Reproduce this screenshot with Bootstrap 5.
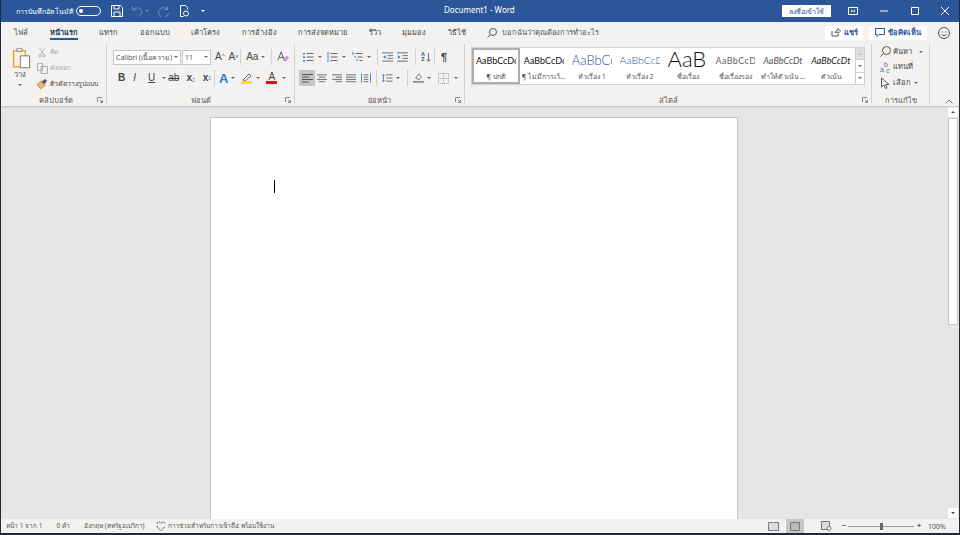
<!DOCTYPE html>
<html lang="th">
<head>
<meta charset="UTF-8" />
<title>Document1 - Word</title>
<link href="https://cdn.jsdelivr.net/npm/bootstrap@5.3.0/dist/css/bootstrap.min.css" rel="stylesheet" />
<style>
  html, body { height: 535px; overflow: hidden; }
  body { background: #1d2b3a; font-family: "Noto Sans", "Liberation Sans", sans-serif; color: #444; font-size: 7.5px; line-height: 1; }
  svg { display: block; flex: none; }
  .win { height: 533px; margin: 0 1px; display: flex; flex-direction: column; background: #e6e6e6; }

  /* title bar */
  .titlebar { height: 22px; background: #2b579a; color: #fff; padding-left: 15px; flex: none; }
  .autosave { font-size: 7px; width: 60px; white-space: nowrap; overflow: visible; }
  .toggle { width: 25px; height: 10px; border: 1px solid #fff; border-radius: 5px; padding: 2px; margin-right: 10px; }
  .toggle i { display: block; width: 4px; height: 4px; background: #fff; border-radius: 50%; }
  .qa-undo { margin-left: 8px; }
  .qa-redo { margin-left: 9px; }
  .qa-file { margin-left: 9px; }
  .qa-more { margin-left: 11px; }
  .doc-title { position: absolute; left: 443px; top: 6px; font-size: 8px; }
  .signin { width: 49px; height: 12px; background: #fff; color: #2b579a; font-size: 7px; margin-left: auto; }
  .winbtns { width: 128px; padding-left: 17px; padding-right: 10px; justify-content: space-between; }

  /* tabs */
  .tabsrow { height: 21px; background: #f3f2f1; flex: none; padding-left: 13px; color: #444; }
  .tabitem { position: relative; height: 21px; display: flex; align-items: center; margin-right: 21.5px; white-space: nowrap; }
  .tabitem.on { font-weight: 700; color: #2b3a55; }
  .tabitem.on::after { content: ""; position: absolute; left: 0; right: 0; bottom: 3px; height: 2px; background: #2b579a; }
  .tell { margin-left: 5px; color: #555; white-space: nowrap; letter-spacing: -.05px; }
  .sharebtn { height: 14px; background: #fff; color: #2b579a; font-weight: 700; gap: 3px; justify-content: center; flex: none; }
  .share-w { width: 38px; margin-left: auto; }
  .comment-w { width: 58px; margin-left: 6px; }
  .smile { margin: 0 9px 0 11px; }

  /* ribbon */
  .ribbon { height: 63px; background: #f3f2f1; flex: none; box-shadow: 0 1px 2px rgba(0,0,0,.18); position: relative; z-index: 2; padding-left: 4px; }
  .grp { position: relative; height: 59px; border-right: 1px solid #d2d0ce; flex: none; margin-top: 1px; }
  .grp-clip { width: 102px; }
  .grp-font { width: 188px; padding: 5px 0 0 6px; }
  .grp-para { width: 170px; padding: 5px 0 0 8px; }
  .grp-styles { width: 407px; padding: 3px 0 0 6px; }
  .grp-edit { width: 58px; padding: 0 0 0 8px; }
  .grp-name { position: absolute; left: 0; right: 0; bottom: -1px; text-align: center; color: #555; }
  .launcher { position: absolute; right: 3px; bottom: 0; }
  .collapse-arrow { position: absolute; right: 6px; bottom: 2px; }
  .caret { width: 0; height: 0; border-left: 2px solid transparent; border-right: 2px solid transparent; border-top: 2px solid #666; flex: none; }
  .caret-up { transform: rotate(180deg); }
  .caret-dim { border-top-color: #bbb; }
  .caret-dark { border-top-color: #444; }
  .caret-white { border-top-color: #fff; }
  .caret-blue { border-top-color: #6f8fc0; }
  .vsep { width: 1px; height: 16px; background: #d2d0ce; flex: none; }
  .ribrow { height: 16px; }
  .ribrow + .ribrow { margin-top: 5px; }
  .m1 { margin-left: 1px; } .m2 { margin-left: 2px; } .m3 { margin-left: 3px; } .m4 { margin-left: 4px; }
  .m5 { margin-left: 5px; } .m6 { margin-left: 6px; } .m7 { margin-left: 7px; } .m8 { margin-left: 8px; }
  .m12 { margin-left: 12px; }

  /* clipboard */
  .paste-col { width: 30px; padding-top: 3px; }
  .paste-icon { margin-left: 4px; }
  .paste-label { margin-top: 2px; }
  .caret-gap { margin-top: 5px; }
  .clip-list { padding-top: 1px; gap: 1px; margin-left: 1px; white-space: nowrap; font-size: 6.8px; }
  .clip-item { height: 15px; gap: 2px; }
  .clip-item.off { color: #aaa; }
  .clip-ico { width: 12px; display: flex; justify-content: center; }

  /* font */
  .combo { height: 15px; background: #fff; border: 1px solid #c8c6c4; color: #555; padding: 0 2px; justify-content: space-between; white-space: nowrap; overflow: hidden; font-size: 7px; }
  .combo-name { width: 68px; }
  .combo-size { width: 29px; margin-left: 1px; }
  .lat { font-family: "Liberation Sans", sans-serif; font-size: 10px; color: #444; }
  .lat sup { font-size: 6px; color: #2b579a; top: -.3em; }
  .lat sub, .lat .sup2 { font-size: 5px; color: #2b7cd3; }
  .fnt-row { padding-left: 5px; }
  .fx { font-size: 13px; color: #2b7cd3; font-family: "Liberation Sans", sans-serif; font-weight: 700; }
  .swatch-col { width: 11px; }
  .swatch { display: block; width: 11px; height: 3px; }
  .sw-yellow { background: #ffe600; }
  .sw-red { background: #e01010; }
  .a-red { line-height: 9px; height: 9px; }

  /* paragraph */
  .para-row2 { margin-left: -4px; }
  .align-on { width: 16px; height: 16px; background: #c8c6c4; display: flex; align-items: center; justify-content: center; }
  .az { font: 700 5.5px/5.5px "Liberation Sans", sans-serif; width: 6px; color: #2b579a; }
  .az span { color: #444; }
  .pilcrow { font: 700 11px/1 "Liberation Sans", sans-serif; }

  /* styles */
  .gallery { background: #fff; width: 394px; height: 38px; border: 1px solid #d2d0ce; }
  .stylecell { width: 47.9px; height: 36px; flex: none; display: flex; flex-direction: column; align-items: center; overflow: hidden; white-space: nowrap; }
  .stylecell.first { outline: 2px solid #b0aeac; outline-offset: -2px; }
  .sample { height: 25px; display: flex; align-items: center; width: 40px; overflow: hidden; font-family: Lato, "Liberation Sans", sans-serif; font-size: 9px; color: #111; }
  .s-h1 { font-size: 13px; color: #2f5496; font-weight: 300; }
  .s-h2 { font-size: 10.5px; color: #2f5496; font-weight: 300; }
  .s-title { font-size: 22px; line-height: 22px; font-weight: 300; align-items: flex-start; }
  .s-sub { color: #666; letter-spacing: .4px; }
  .s-em1 { color: #555; font-style: italic; }
  .s-em2 { color: #222; font-style: italic; }
  .stylename { color: #555; font-size: 7px; }
  .galscroll { width: 9px; flex: none; border-left: 1px solid #d2d0ce; margin-left: auto; }
  .galscroll div { flex: 1; border-bottom: 1px solid #d2d0ce; display: flex; align-items: center; justify-content: center; }
  .galscroll .gal-top { background: #e1dfdd; }
  .galscroll .gal-end { border-bottom: 0; }

  /* editing */
  .edit-list { white-space: nowrap; gap: .5px; }
  .edit-item { height: 15px; gap: 2px; }
  .caret-find { margin-left: 5px; }
  .abc-b { font: 7px "Liberation Sans", sans-serif; fill: #a349a4; }
  .abc-ac { font: 7px "Liberation Sans", sans-serif; fill: #2b7cd3; }

  /* document */
  .canvas { flex: 1; min-height: 0; display: flex; position: relative; overflow: hidden; padding-top: 11px; }
  .pagewrap { flex: 1; display: flex; justify-content: center; padding-right: 11px; }
  .sheet { width: 528px; height: 600px; background: #fff; border: 1px solid #c6c6c6; position: relative; margin-left: -1px; }
  .cursor { position: absolute; left: 63px; top: 62px; width: 1px; height: 13px; background: #000; }
  .vscroll { width: 10px; position: absolute; right: 1px; top: 1px; bottom: 1px; display: flex; flex-direction: column; }
  .sb-arrow { height: 10px; background: #fff; display: flex; align-items: center; justify-content: center; flex: none; }
  .sb-thumb { height: 207px; background: #fff; border: 1px solid #c8c8c8; flex: none; margin-top: 1px; }

  /* status bar */
  .statusbar { height: 14px; background: #f3f2f1; flex: none; font-size: 6.5px; color: #555; padding-left: 5px; white-space: nowrap; }
  .st-gap { margin-left: 14px; }
  .st-ico { margin: 0 2px 0 11px; }
  .viewbtn { width: 18px; height: 14px; display: flex; align-items: center; justify-content: center; }
  .viewbtn.on { background: #c8c6c4; }
  .view-print { margin-left: 4px; }
  .view-web { margin-left: 13px; }
  .zoom-minus { margin-left: 7px; width: 6px; font-weight: 700; font-size: 7.5px; }
  .zoomtrack { width: 66px; height: 1px; background: #999; position: relative; margin: 0 2px 0 0; }
  .zoomtrack i { position: absolute; left: 32px; top: -3px; width: 3px; height: 7px; background: #666; }
  .zoom-plus { width: 8px; margin-left: 1px; font-weight: 700; font-size: 7.5px; }
  .zoom-pct { width: 18px; margin: 0 13px 0 3px; font-size: 7px; }
</style>
</head>
<body>
<div class="win">

  <!-- title bar -->
  <div class="titlebar d-flex align-items-center position-relative">
    <span class="autosave">การบันทึกอัตโนมัติ</span>
    <span class="toggle"><i></i></span>
    <svg width="12" height="12" viewBox="0 0 12 12" fill="none" stroke="#fff"><path d="M.5.5h9l2 2v9H.5z M3 .5v3.5h5V.5 M3 11.500V7h6v4.500"/></svg>
    <svg class="qa-undo" width="12" height="12" viewBox="0 0 12 12" fill="none" stroke="#6f8fc0"><path d="M1.500 1v4h4M1.500 5c2-3 9-3 9 2 0 2-1 3-2.500 4"/></svg>
    <span class="caret caret-blue m2"></span>
    <svg class="qa-redo" width="12" height="12" viewBox="0 0 12 12" fill="none" stroke="#6f8fc0"><path d="M9.500 1v3.500H6M9.500 4.500A5 5 0 1 0 10.500 8"/></svg>
    <svg class="qa-file" width="11" height="12" viewBox="0 0 11 12" fill="none" stroke="#fff"><path d="M1.500.5h5l2 2v2M1.500.5v11h3"/><circle cx="7" cy="8.500" r="2.500"/></svg>
    <span class="caret caret-white qa-more"></span>
    <span class="doc-title">Document1  -  Word</span>
    <span class="signin d-flex align-items-center justify-content-center">ลงชื่อเข้าใช้</span>
    <div class="winbtns d-flex align-items-center">
      <svg width="10" height="8" viewBox="0 0 10 8" fill="none" stroke="#fff"><path d="M.5.5h9v7h-9z M3 3l1.500 1L3 5M7 3L5.500 4 7 5"/></svg>
      <svg width="8" height="8" viewBox="0 0 8 8" stroke="#fff"><path d="M0 4h8"/></svg>
      <svg width="8" height="8" viewBox="0 0 8 8" fill="none" stroke="#fff"><path d="M.5.5h7v7h-7z"/></svg>
      <svg width="8" height="8" viewBox="0 0 8 8" stroke="#fff"><path d="M0 0l8 8M8 0l-8 8"/></svg>
    </div>
  </div>

  <!-- tabs -->
  <div class="tabsrow d-flex align-items-center">
    <span class="tabitem">ไฟล์</span>
    <span class="tabitem on">หน้าแรก</span>
    <span class="tabitem">แทรก</span>
    <span class="tabitem">ออกแบบ</span>
    <span class="tabitem">เค้าโครง</span>
    <span class="tabitem">การอ้างอิง</span>
    <span class="tabitem">การส่งจดหมาย</span>
    <span class="tabitem">รีวิว</span>
    <span class="tabitem">มุมมอง</span>
    <span class="tabitem">วิธีใช้</span>
    <svg width="10" height="10" viewBox="0 0 10 10" fill="none" stroke="#555"><circle cx="6" cy="4" r="3.500"/><path d="M3.500 6.500L.5 9.500"/></svg>
    <span class="tell">บอกฉันว่าคุณต้องการทำอะไร</span>
    <span class="sharebtn share-w d-flex align-items-center">
      <svg width="10" height="9" viewBox="0 0 10 9" fill="none" stroke="#555"><path d="M1 3v5h6V6M4 5c0-2 2-3 3-3V.5L9.500 3 7 5.500V4C6 4 5 4 4 5z"/></svg>แชร์
    </span>
    <span class="sharebtn comment-w d-flex align-items-center">
      <svg width="10" height="9" viewBox="0 0 10 9" fill="none" stroke="#2b579a"><path d="M.5.5h9v6H4L2 8.500v-2H.5z"/></svg>ข้อคิดเห็น
    </span>
    <svg class="smile" width="12" height="12" viewBox="0 0 12 12" fill="none" stroke="#555"><circle cx="6" cy="6" r="5.500"/><path d="M3.500 7.500c1 1.500 4 1.500 5 0M4 4.500v1M8 4.500v1"/></svg>
  </div>

  <!-- ribbon -->
  <div class="ribbon d-flex">

    <!-- clipboard -->
    <div class="grp grp-clip">
      <div class="d-flex">
        <div class="paste-col d-flex flex-column align-items-center">
          <svg class="paste-icon" width="20" height="22" viewBox="0 0 22 26" fill="none"><path d="M1 4.500h14v19H1z" stroke="#e3a03c" stroke-width="1.600" fill="#fdf1dc"/><path d="M5 4.500V2h2l1-1 1 1h2v3H5z" stroke="#777" fill="#fff"/><path d="M9 10.500h11v14H9z" stroke="#666" fill="#fff"/></svg>
          <span class="paste-label">วาง</span>
          <span class="caret caret-gap"></span>
        </div>
        <div class="clip-list d-flex flex-column">
          <div class="clip-item off d-flex align-items-center"><span class="clip-ico"><svg width="8" height="11" viewBox="0 0 10 12" fill="none" stroke="#aaa"><path d="M2 .5l5 8M8 .5l-5 8"/><circle cx="2.500" cy="10" r="1.500"/><circle cx="7.500" cy="10" r="1.500"/></svg></span>ตัด</div>
          <div class="clip-item off d-flex align-items-center"><span class="clip-ico"><svg width="11" height="11" viewBox="0 0 11 11" fill="none" stroke="#aaa"><path d="M.5.5h5v7h-5zM4 3.500h6.500v7H4z"/></svg></span>คัดลอก</div>
          <div class="clip-item d-flex align-items-center fw-medium"><span class="clip-ico"><svg width="12" height="11" viewBox="0 0 13 12"><path d="M1 6l5-4 4 5-5 4z" fill="#e8b96b" stroke="#b97a28" stroke-width=".7"/><path d="M6 3l4-3 2 2-3 4z" fill="#555"/></svg></span>ตัวคัดวางรูปแบบ</div>
        </div>
      </div>
      <span class="grp-name">คลิปบอร์ด</span>
      <svg class="launcher" width="6" height="6" viewBox="0 0 6 6" fill="none" stroke="#888"><path d="M.5 5V.5H5M3 3l2.500 2.500M5.500 3v2.500H3"/></svg>
    </div>

    <!-- font -->
    <div class="grp grp-font">
      <div class="ribrow d-flex align-items-center">
        <span class="combo combo-name d-flex align-items-center">Calibri (เนื้อความ)<i class="caret"></i></span>
        <span class="combo combo-size d-flex align-items-center">11<i class="caret"></i></span>
        <span class="lat m4">A<sup>^</sup></span>
        <span class="lat m4">A<sup>v</sup></span>
        <span class="vsep m2"></span>
        <span class="lat m5">Aa</span><i class="caret m3"></i>
        <span class="vsep m6"></span>
        <svg class="m5" width="12" height="12" viewBox="0 0 13 13" fill="none"><path d="M1 10L4.500 1 8 10M2.500 7h4" stroke="#555"/><path d="M7 9l4-3 1.500 1.500-4 3.500z" fill="#d9b4e6" stroke="#a349a4" stroke-width=".7"/></svg>
      </div>
      <div class="ribrow fnt-row d-flex align-items-center">
        <b class="lat">B</b>
        <i class="lat m8">I</i>
        <u class="lat m12">U</u><i class="caret m7"></i>
        <s class="lat m2">ab</s>
        <span class="lat m7"><b>x</b><sub>2</sub></span>
        <span class="lat m8"><b>x</b><sup class="sup2">2</sup></span>
        <span class="vsep m3"></span>
        <span class="fx m4">A</span><i class="caret m3"></i>
        <span class="swatch-col d-flex flex-column align-items-center m6"><svg width="11" height="8" viewBox="0 0 11 8" fill="none" stroke="#666"><path d="M2 7l6-6 2 2-6 5z"/></svg><span class="swatch sw-yellow"></span></span><i class="caret m4"></i>
        <span class="swatch-col d-flex flex-column align-items-center m6"><span class="lat a-red">A</span><span class="swatch sw-red"></span></span><i class="caret m5"></i>
      </div>
      <span class="grp-name">ฟอนต์</span>
      <svg class="launcher" width="6" height="6" viewBox="0 0 6 6" fill="none" stroke="#888"><path d="M.5 5V.5H5M3 3l2.500 2.500M5.500 3v2.500H3"/></svg>
    </div>

    <!-- paragraph -->
    <div class="grp grp-para">
      <div class="ribrow d-flex align-items-center">
        <svg width="11" height="10" viewBox="0 0 11 10" fill="none"><path d="M3.500 1.500h7M3.500 5h7M3.500 8.500h7" stroke="#666"/><path d="M0 1h2v1.500H0zM0 4.500h2V6H0zM0 8h2v1.500H0z" fill="#2b7cd3"/></svg><i class="caret m4"></i>
        <svg class="m5" width="11" height="10" viewBox="0 0 11 10" fill="none"><path d="M3.500 1.500h7M3.500 5h7M3.500 8.500h7" stroke="#666"/><path d="M1 0v3M1 3.500v3M1 7v3" stroke="#2b7cd3"/></svg><i class="caret m4"></i>
        <svg class="m6" width="11" height="10" viewBox="0 0 11 10" fill="none"><path d="M3.500 1.500h7M5.500 5h5M7.500 8.500h3" stroke="#666"/><path d="M1 0v3M3 4v2M5 7v2" stroke="#2b7cd3"/></svg><i class="caret m4"></i>
        <span class="vsep m6"></span>
        <svg class="m4" width="11" height="10" viewBox="0 0 12 10" fill="none"><path d="M0 .5h12M6 3.500h6M6 6.500h6M0 9.500h12" stroke="#666"/><path d="M4 3L1 5l3 2z" fill="#2b7cd3"/></svg>
        <svg class="m4" width="11" height="10" viewBox="0 0 12 10" fill="none"><path d="M0 .5h12M6 3.500h6M6 6.500h6M0 9.500h12" stroke="#666"/><path d="M1 3l3 2-3 2z" fill="#2b7cd3"/></svg>
        <span class="vsep m7"></span>
        <span class="az m4 d-flex flex-column align-items-center">A<span>Z</span></span>
        <svg width="5" height="11" viewBox="0 0 6 11" fill="none" stroke="#555"><path d="M3 0v10M1 8l2 2 2-2"/></svg>
        <span class="vsep m3"></span>
        <span class="pilcrow m6">¶</span>
      </div>
      <div class="ribrow para-row2 d-flex align-items-center">
        <span class="align-on"><svg width="11" height="9" viewBox="0 0 11 9" stroke="#555"><path d="M0 .5h11M0 3h7M0 5.500h11M0 8h7"/></svg></span>
        <svg class="m2" width="10" height="9" viewBox="0 0 11 9" stroke="#666"><path d="M0 .5h11M2 3h7M0 5.500h11M2 8h7"/></svg>
        <svg class="m5" width="10" height="9" viewBox="0 0 11 9" stroke="#666"><path d="M0 .5h11M4 3h7M0 5.500h11M4 8h7"/></svg>
        <svg class="m4" width="10" height="9" viewBox="0 0 11 9" stroke="#666"><path d="M0 .5h11M0 3h11M0 5.500h11M0 8h11"/></svg>
        <svg class="m5" width="10" height="10" viewBox="0 0 11 10" fill="none"><path d="M3 1.500h5M3 4h5M3 6.500h5M3 9h5" stroke="#666"/><path d="M.5 0v10M10.500 0v10" stroke="#2b7cd3"/></svg>
        <span class="vsep m5"></span>
        <svg class="m5" width="11" height="10" viewBox="0 0 12 10" fill="none"><path d="M4.500 1.500h7M4.500 5h7M4.500 8.500h7" stroke="#666"/><path d="M1.500 1v8M0 2.500L1.500 1 3 2.500M0 7.500L1.500 9 3 7.500" stroke="#2b7cd3"/></svg><i class="caret m3"></i>
        <span class="vsep m7"></span>
        <svg class="m5" width="11" height="12" viewBox="0 0 13 12" fill="none"><path d="M3 6l4-5 3 4-3 3z" stroke="#666"/><path d="M0 10.500h13" stroke="#888" stroke-width="2"/></svg><i class="caret m3"></i>
        <svg class="m7" width="11" height="11" viewBox="0 0 12 12" fill="none" stroke="#999" stroke-dasharray="1 1"><path d="M.5.5h11v11H.5zM6 0v12M0 6h12"/></svg><i class="caret m5"></i>
      </div>
      <span class="grp-name">ย่อหน้า</span>
      <svg class="launcher" width="6" height="6" viewBox="0 0 6 6" fill="none" stroke="#888"><path d="M.5 5V.5H5M3 3l2.500 2.500M5.500 3v2.500H3"/></svg>
    </div>

    <!-- styles -->
    <div class="grp grp-styles">
      <div class="gallery d-flex">
        <div class="stylecell first"><span class="sample">AaBbCcDc</span><span class="stylename">¶ ปกติ</span></div>
        <div class="stylecell"><span class="sample">AaBbCcDc</span><span class="stylename">¶ ไม่มีการเว้...</span></div>
        <div class="stylecell"><span class="sample s-h1">AaBbCc</span><span class="stylename">หัวเรื่อง 1</span></div>
        <div class="stylecell"><span class="sample s-h2">AaBbCcD</span><span class="stylename">หัวเรื่อง 2</span></div>
        <div class="stylecell"><span class="sample s-title">AaB</span><span class="stylename">ชื่อเรื่อง</span></div>
        <div class="stylecell"><span class="sample s-sub">AaBbCcD</span><span class="stylename">ชื่อเรื่องรอง</span></div>
        <div class="stylecell"><span class="sample s-em1">AaBbCcDt</span><span class="stylename">ทำให้ตัวเน้น...</span></div>
        <div class="stylecell"><span class="sample s-em2">AaBbCcDt</span><span class="stylename">ตัวเน้น</span></div>
        <div class="galscroll d-flex flex-column">
          <div class="gal-top"><i class="caret caret-up caret-dim"></i></div>
          <div><i class="caret"></i></div>
          <div class="gal-end"><i class="caret"></i></div>
        </div>
      </div>
      <span class="grp-name">สไตล์</span>
      <svg class="launcher" width="6" height="6" viewBox="0 0 6 6" fill="none" stroke="#888"><path d="M.5 5V.5H5M3 3l2.500 2.500M5.500 3v2.500H3"/></svg>
    </div>

    <!-- editing -->
    <div class="grp grp-edit">
      <div class="edit-list d-flex flex-column">
        <div class="edit-item d-flex align-items-center"><svg width="11" height="11" viewBox="0 0 11 11" fill="none" stroke="#555"><circle cx="6.500" cy="4.500" r="4"/><path d="M3.500 7.500L.5 10.500"/></svg>ค้นหา<i class="caret caret-find"></i></div>
        <div class="edit-item d-flex align-items-center"><svg width="11" height="12" viewBox="0 0 11 12"><text class="abc-b" x="4" y="6">b</text><text class="abc-ac" x="0" y="11">a</text><text class="abc-ac" x="6" y="11.500">c</text></svg>แทนที่</div>
        <div class="edit-item d-flex align-items-center"><svg width="11" height="12" viewBox="0 0 10 12" fill="#fff" stroke="#555"><path d="M1 1v9l2.500-2 1.500 3.500 1.500-.7L5 7.500h3.500z"/></svg>เลือก<i class="caret m1"></i></div>
      </div>
      <span class="grp-name">การแก้ไข</span>
    </div>

    <div class="position-relative flex-fill">
      <svg class="collapse-arrow" width="8" height="5" viewBox="0 0 8 5" fill="none" stroke="#777"><path d="M.5 4.500L4 1l3.500 3.500"/></svg>
    </div>
  </div>

  <!-- document area -->
  <div class="canvas">
    <div class="pagewrap">
      <div class="sheet"><span class="cursor"></span></div>
    </div>
    <div class="vscroll">
      <div class="sb-arrow"><i class="caret caret-up caret-dark"></i></div>
      <div class="sb-thumb"></div>
      <div class="sb-arrow mt-auto"><i class="caret caret-dark"></i></div>
    </div>
  </div>

  <!-- status bar -->
  <div class="statusbar d-flex align-items-center">
    <span>หน้า 1 จาก 1</span>
    <span class="st-gap">0 คำ</span>
    <span class="st-gap">อังกฤษ (สหรัฐอเมริกา)</span>
    <svg class="st-ico" width="10" height="10" viewBox="0 0 10 10" fill="none" stroke="#444"><path d="M1 2.500c0-2 3-2 4 0 1-2 4-2 4 0M1 5c1 2 3 4 4 4.500C6 9 8 7 9 5" stroke-dasharray="2 1"/></svg>
    <span>การช่วยสำหรับการเข้าถึง: พร้อมใช้งาน</span>
    <div class="d-flex align-items-center ms-auto">
      <span class="viewbtn"><svg width="11" height="9" viewBox="0 0 11 9" fill="#ddd" stroke="#777"><path d="M.5.5h4.500l.5.500.5-.5h4.500v8h-4.500l-.5.500-.5-.5H.5z"/></svg></span>
      <span class="viewbtn on view-print"><svg width="10" height="9" viewBox="0 0 10 9" fill="#bbb" stroke="#777"><path d="M.5.500h9v8h-9z"/></svg></span>
      <span class="viewbtn view-web"><svg width="11" height="10" viewBox="0 0 11 10" fill="#ddd" stroke="#777"><path d="M.5.500h8v8h-8z"/><circle cx="8" cy="7.500" r="2" fill="#fff"/></svg></span>
      <span class="zoom-minus">−</span>
      <span class="zoomtrack"><i></i></span>
      <span class="zoom-plus">+</span>
      <span class="zoom-pct">100%</span>
    </div>
  </div>
</div>
<script src="https://cdn.jsdelivr.net/npm/bootstrap@5.3.0/dist/js/bootstrap.bundle.min.js"></script>
</body>
</html>
